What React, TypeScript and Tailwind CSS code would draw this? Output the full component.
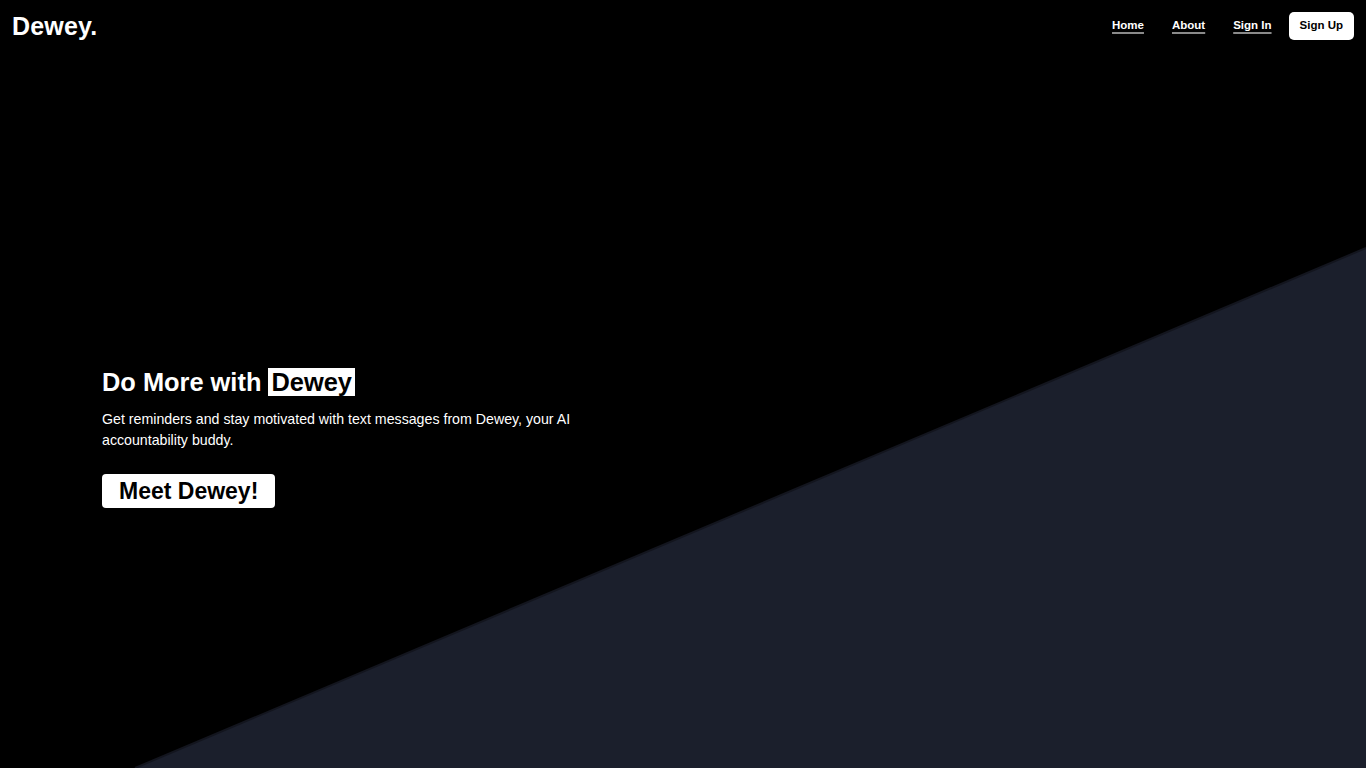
import React from 'react';

const navLinks = ['Home', 'About', 'Sign In'];

const App: React.FC = () => {
  return (
    <div
      className="relative min-h-screen w-full overflow-hidden bg-black text-white"
      style={{ fontFamily: '"Liberation Sans", Arial, sans-serif' }}
    >
      {/* Diagonal background */}
      <svg
        className="absolute inset-0 h-full w-full"
        viewBox="0 0 1366 768"
        preserveAspectRatio="none"
      >
        <polygon points="1366,248 1366,768 135,768" fill="#1b1f2c" />
        <line x1="1366" y1="248" x2="135" y2="768" stroke="#13151e" strokeWidth="2" />
      </svg>

      {/* Header */}
      <header className="relative z-10 flex items-center justify-between px-3 pt-[11px]">
        <div className="text-[25px] font-bold leading-[30px] tracking-[0.2px]">Dewey.</div>
        <nav className="flex items-center">
          {navLinks.map((link) => (
            <a
              key={link}
              href="#"
              className="px-[14px] text-[11.5px] font-bold underline decoration-[#8a8a8a] decoration-2 underline-offset-[3px]"
            >
              {link}
            </a>
          ))}
          <button className="ml-[3px] h-[28px] rounded-[5px] bg-white px-[11px] text-[11.5px] font-bold text-black">
            Sign Up
          </button>
        </nav>
      </header>

      {/* Hero */}
      <main className="relative z-10 pl-[102px] pt-[326px]">
        <h1 className="text-[25.4px] font-bold leading-[30px]">
          Do More with <span className="bg-white px-[3px] text-black">Dewey</span>
        </h1>
        <p className="mt-[12px] max-w-[480px] text-[14.2px] leading-[21px]">
          Get reminders and stay motivated with text messages from Dewey, your AI accountability buddy.
        </p>
        <button className="mt-[23px] h-[34px] rounded-[4px] bg-white px-[17px] text-[23px] font-bold leading-none text-black">
          Meet Dewey!
        </button>
      </main>
    </div>
  );
};

export default App;
